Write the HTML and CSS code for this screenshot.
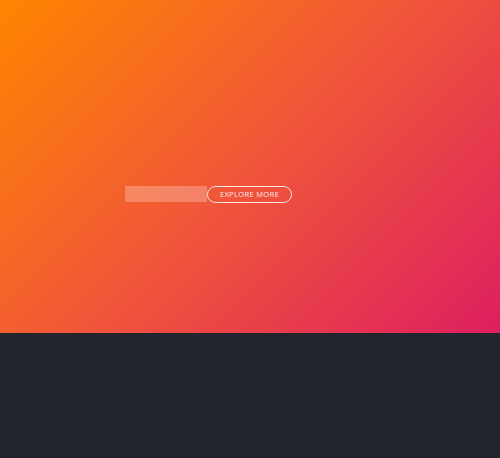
FILE: index.html
```html
<!DOCTYPE html>
<html>
<head>
<meta charset="utf-8">
<link rel="stylesheet" href="styles.css">
</head>
<body>
<section class="hero">
  <form class="signup">
    <input class="field" type="text" aria-label="Email">
    <button class="btn" type="button">EXPLORE MORE</button>
  </form>
</section>
<footer class="footer"></footer>
</body>
</html>
```
FILE: styles.css
```css
html, body {
  margin: 0;
  padding: 0;
  height: 100%;
}
body {
  background: #22252d;
  font-family: "Open Sans", "Liberation Sans", Arial, sans-serif;
}
.hero {
  height: 333px;
  box-sizing: border-box;
  padding-top: 186px;
  padding-left: 125px;
  background: linear-gradient(135deg, #ff8500 0%, #f0563a 50%, #dd1f5f 100%);
}
.signup {
  display: flex;
  align-items: flex-start;
  margin: 0;
}
.field {
  width: 82px;
  height: 16px;
  box-sizing: border-box;
  border: none;
  margin: 0;
  padding: 0;
  background: rgba(255, 255, 255, 0.25);
}
.btn {
  width: 85px;
  height: 17px;
  box-sizing: border-box;
  margin: 0;
  padding: 0;
  border: 1px solid rgba(255, 255, 255, 0.85);
  border-radius: 9px;
  background: transparent;
  color: rgba(255, 255, 255, 0.9);
  font-family: "Open Sans", "Liberation Sans", Arial, sans-serif;
  font-weight: 400;
  font-size: 7.6px;
  letter-spacing: 0.3px;
  line-height: 15px;
}
.footer {
  height: 125px;
  background: #22252d;
}
```
